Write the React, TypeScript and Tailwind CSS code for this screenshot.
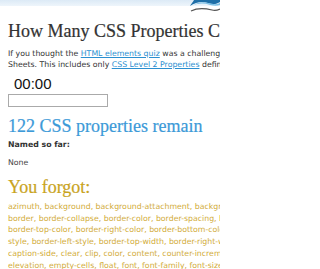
import React from "react";

const serif = "font-['Liberation_Serif',Georgia,serif]";
const sans = "font-['DejaVu_Sans',Verdana,sans-serif]";

const forgot = [
  "azimuth, background, background-attachment, background-color,",
  "border, border-collapse, border-color, border-spacing, border-style,",
  "border-top-color, border-right-color, border-bottom-color, border-left-",
  "style, border-left-style, border-top-width, border-right-width,",
  "caption-side, clear, clip, color, content, counter-increment,",
  "elevation, empty-cells, float, font, font-family, font-size,",
];

export default function App() {
  return (
    <div className="relative w-[220px] h-[269px] overflow-hidden bg-white">
      <div className="h-[6px] bg-gradient-to-b from-[#dceaf6] to-[#eef5fb]" />
      <svg className="absolute right-0 top-0" width="32" height="14" viewBox="0 0 32 14">
        <path d="M2 6 C8 2 14 1 20 3 C25 5 29 4 32 2 L32 0 L6 0 C5 2 3 4 2 6 Z" fill="#1e6fa8" />
        <path d="M4 6 C10 3 16 3 22 5 C26 6 29 6 32 5 L32 3 C28 5 24 4 20 3 C14 1 9 3 4 6 Z" fill="#7cc0e6" />
        <path d="M3 11 C9 8 16 8 24 10 C27 11 30 10 32 9" stroke="#555" strokeWidth="1.2" fill="none" />
      </svg>
      <div className="flex flex-col items-start pl-[8px] w-[420px]">
        <h1 className={`mt-[15px] text-[18px] leading-[20px] text-[#333] [-webkit-text-stroke:0.2px_#333] ${serif}`}>
          How Many CSS Properties Can You Name?
        </h1>
        <div className={`mt-[7px] text-[7.8px] leading-[11px] text-[#333] whitespace-nowrap ${sans}`}>
          <div>
            If you thought the <span className="text-[#2b8fd0] underline">HTML elements quiz</span> was a challenge, try naming all the CSS properties in Cascading Style
          </div>
          <div>
            Sheets. This includes only <span className="text-[#2b8fd0] underline">CSS Level 2 Properties</span> defined by the W3C.
          </div>
        </div>
        <div className="mt-[6px] ml-[6px] text-[15px] leading-[16px] text-[#111] font-['Liberation_Sans',Arial,sans-serif]">
          00:00
        </div>
        <div className="mt-[2px] w-[100px] h-[13px] border border-[#aaa] bg-white" />
        <div className={`mt-[9px] text-[18px] leading-[20px] text-[#3c9ad8] [-webkit-text-stroke:0.2px_#3c9ad8] ${serif}`}>
          122 CSS properties remain
        </div>
        <div className={`mt-[4px] text-[7.8px] leading-[10px] font-bold text-[#333] ${sans}`}>
          Named so far:
        </div>
        <div className={`mt-[8px] text-[7.8px] leading-[10px] text-[#444] ${sans}`}>
          None
        </div>
        <div className={`mt-[9px] text-[18px] leading-[20px] text-[#c9a41e] [-webkit-text-stroke:0.2px_#c9a41e] ${serif}`}>
          You forgot:
        </div>
        <div className={`mt-[4px] text-[7.8px] leading-[11.7px] text-[#d2ac3a] whitespace-nowrap ${sans}`}>
          {forgot.map((l) => (
            <div key={l}>{l}</div>
          ))}
        </div>
      </div>
    </div>
  );
}
